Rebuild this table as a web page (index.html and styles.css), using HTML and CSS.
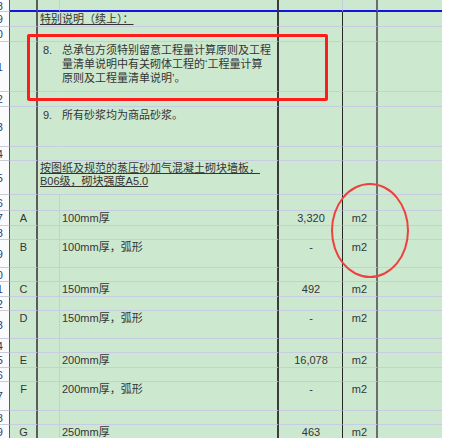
FILE: index.html
```html
<!DOCTYPE html>
<html>
<head>
<meta charset="utf-8">
<link rel="stylesheet" href="styles.css">
</head>
<body>
<div class="sheet">
  <div class="row top">
    <div class="rh"><span>18</span></div><div class="ca"></div><div class="cb"></div><div class="cd"></div><div class="cq"></div><div class="cu"></div><div class="cr"></div>
  </div>
  <div class="row h15 notes">
    <div class="rh"><span>19</span></div><div class="ca"></div><div class="cm"><span class="ul">特别说明（续上）：</span></div><div class="cq"></div><div class="cu"></div><div class="cr"></div>
  </div>
  <div class="row h15 notes">
    <div class="rh"><span>20</span></div><div class="ca"></div><div class="cb"></div><div class="cd"></div><div class="cq"></div><div class="cu"></div><div class="cr"></div>
  </div>
  <div class="row h50 notes">
    <div class="rh"><span>21</span></div><div class="ca"></div><div class="cb num">8.</div><div class="cd multi">总承包方须特别留意工程量计算原则及工程<br>量清单说明中有关砌体工程的‘工程量计算<br>原则及工程量清单说明’。</div><div class="cq"></div><div class="cu"></div><div class="cr"></div>
  </div>
  <div class="row h15 notes">
    <div class="rh"><span>22</span></div><div class="ca"></div><div class="cb"></div><div class="cd"></div><div class="cq"></div><div class="cu"></div><div class="cr"></div>
  </div>
  <div class="row h40 notes">
    <div class="rh"><span>23</span></div><div class="ca"></div><div class="cb num">9.</div><div class="cd multi">所有砂浆均为商品砂浆。</div><div class="cq"></div><div class="cu"></div><div class="cr"></div>
  </div>
  <div class="row h14 notes">
    <div class="rh"><span>24</span></div><div class="ca"></div><div class="cb"></div><div class="cd"></div><div class="cq"></div><div class="cu"></div><div class="cr"></div>
  </div>
  <div class="row h34 notes">
    <div class="rh"><span>25</span></div><div class="ca"></div><div class="cm two"><span class="ul">按图纸及规范的蒸压砂加气混凝土砌块墙板，</span><br><span class="ul">B06级，砌块强度A5.0</span></div><div class="cq"></div><div class="cu"></div><div class="cr"></div>
  </div>
  <div class="row h16">
    <div class="rh"><span>26</span></div><div class="ca"></div><div class="cb"></div><div class="cd"></div><div class="cq"></div><div class="cu"></div><div class="cr"></div>
  </div>
  <div class="row h15">
    <div class="rh"><span>27</span></div><div class="ca">A</div><div class="cb"></div><div class="cd">100mm厚</div><div class="cq">3,320</div><div class="cu">m2</div><div class="cr"></div>
  </div>
  <div class="row h14">
    <div class="rh"><span>28</span></div><div class="ca"></div><div class="cb"></div><div class="cd"></div><div class="cq"></div><div class="cu"></div><div class="cr"></div>
  </div>
  <div class="row h28">
    <div class="rh"><span>29</span></div><div class="ca">B</div><div class="cb"></div><div class="cd">100mm厚，弧形</div><div class="cq">-</div><div class="cu">m2</div><div class="cr"></div>
  </div>
  <div class="row h14">
    <div class="rh"><span>30</span></div><div class="ca"></div><div class="cb"></div><div class="cd"></div><div class="cq"></div><div class="cu"></div><div class="cr"></div>
  </div>
  <div class="row h15">
    <div class="rh"><span>31</span></div><div class="ca">C</div><div class="cb"></div><div class="cd">150mm厚</div><div class="cq">492</div><div class="cu">m2</div><div class="cr"></div>
  </div>
  <div class="row h14">
    <div class="rh"><span>32</span></div><div class="ca"></div><div class="cb"></div><div class="cd"></div><div class="cq"></div><div class="cu"></div><div class="cr"></div>
  </div>
  <div class="row h28">
    <div class="rh"><span>33</span></div><div class="ca">D</div><div class="cb"></div><div class="cd">150mm厚，弧形</div><div class="cq">-</div><div class="cu">m2</div><div class="cr"></div>
  </div>
  <div class="row h14">
    <div class="rh"><span>34</span></div><div class="ca"></div><div class="cb"></div><div class="cd"></div><div class="cq"></div><div class="cu"></div><div class="cr"></div>
  </div>
  <div class="row h15">
    <div class="rh"><span>35</span></div><div class="ca">E</div><div class="cb"></div><div class="cd">200mm厚</div><div class="cq">16,078</div><div class="cu">m2</div><div class="cr"></div>
  </div>
  <div class="row h14">
    <div class="rh"><span>36</span></div><div class="ca"></div><div class="cb"></div><div class="cd"></div><div class="cq"></div><div class="cu"></div><div class="cr"></div>
  </div>
  <div class="row h29">
    <div class="rh"><span>37</span></div><div class="ca">F</div><div class="cb"></div><div class="cd">200mm厚，弧形</div><div class="cq">-</div><div class="cu">m2</div><div class="cr"></div>
  </div>
  <div class="row h14">
    <div class="rh"><span>38</span></div><div class="ca"></div><div class="cb"></div><div class="cd"></div><div class="cq"></div><div class="cu"></div><div class="cr"></div>
  </div>
  <div class="row h15">
    <div class="rh"><span>39</span></div><div class="ca">G</div><div class="cb"></div><div class="cd">250mm厚</div><div class="cq">463</div><div class="cu">m2</div><div class="cr"></div>
  </div>
  <div class="mark-box"></div>
  <div class="mark-ellipse"></div>
</div>
</body>
</html>
```

FILE: styles.css
```css
* { box-sizing: border-box; }
html, body { margin: 0; padding: 0; background: #ffffff; }
body {
  width: 452px;
  height: 438px;
  overflow: hidden;
  font-family: "Liberation Sans", "Noto Sans CJK SC", sans-serif;
  font-size: 11px;
  color: #353535;
}
.sheet {
  position: relative;
  width: 442px;
  background: #cce8cf;
}
.row {
  display: flex;
  height: 15px;
  line-height: 14px;
}
.row > div {
  border-bottom: 1px solid #c7cce0;
  white-space: nowrap;
}
.row.top { height: 12px; }
.row.top > div { border-bottom: 2px solid #1515e0; }
.row.top > .rh { border-bottom: 1px solid #c9ccd6; }
.h14 { height: 14px; }
.h15 { height: 15px; }
.h16 { height: 16px; }
.h28 { height: 28px; }
.h29 { height: 29px; }
.h34 { height: 34px; }
.h40 { height: 40px; }
.h50 { height: 50px; }

.rh {
  width: 10px;
  background: #fbfbfd;
  border-right: 1px solid #3a55e0;
  overflow: hidden;
  display: flex;
  justify-content: flex-end;
  align-items: center;
  padding-right: 6px;
  color: #2c3b66;
}
.row > .rh { border-bottom-color: #c9ccd6; }
.rh span { flex: none; }
.ca {
  width: 28px;
  border-right: 2px solid #5c5c5c;
  text-align: center;
  padding-left: 1px;
}
.cb {
  width: 22px;
  border-right: 1px solid #c7cce0;
}
.notes .cb { border-right-color: transparent; }
.cb.num { padding-left: 5px; padding-top: 1px; }
.cd {
  width: 219px;
  border-right: 2px solid #3c3c3c;
  padding-left: 2px;
}
.cd.multi { padding-top: 1px; line-height: 14px; }
.cm {
  width: 241px;
  border-right: 2px solid #3c3c3c;
  padding-left: 2px;
}
.cm.two { line-height: 13px; padding-top: 1px; }
.ul {
  text-decoration: underline;
  text-underline-offset: 1px;
}
.cq {
  width: 64px;
  border-right: 1px solid #262626;
  text-align: center;
  padding-left: 1px;
}
.top .cq { border-right-color: #c7cce0; }
.cu {
  width: 35px;
  border-right: 2px solid #6d6d6d;
  text-align: center;
}
.cr { width: 64px; }

.mark-box {
  position: absolute;
  left: 27px;
  top: 34px;
  width: 301px;
  height: 67px;
  border: 3px solid #ff1c1c;
  border-radius: 2px;
}
.mark-ellipse {
  position: absolute;
  left: 331px;
  top: 183px;
  width: 78px;
  height: 95px;
  border: 2px solid #ef3f3f;
  border-radius: 50%;
}
```
